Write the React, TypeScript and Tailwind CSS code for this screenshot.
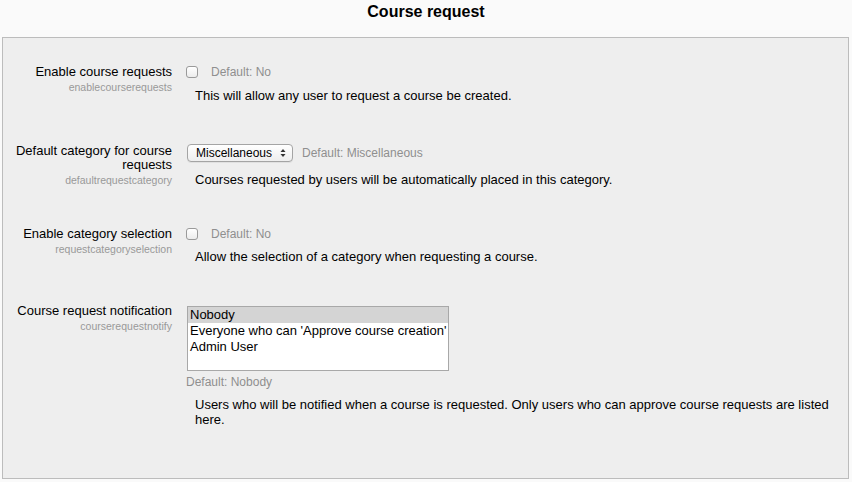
const font = { fontFamily: '"Liberation Sans", Arial, Helvetica, sans-serif' };

function Checkbox() {
  return (
    <div className="w-[12px] h-[12px] rounded-[3px] border border-[#9a9a9a] bg-gradient-to-b from-white to-[#ececec] shadow-[inset_0_1px_0_#fff]" />
  );
}

function SelectBox({ value }: { value: string }) {
  return (
    <div className="w-[106px] h-[18px] rounded-[4px] border border-[#a4a4a4] bg-gradient-to-b from-white to-[#eeeeee] flex items-center justify-between pl-[8px] pr-[6px] shadow-[0_1px_0_rgba(0,0,0,0.06)]">
      <span className="text-[12px] leading-none text-black">{value}</span>
      <svg width="6" height="10" viewBox="0 0 6 10" className="text-[#333]">
        <path d="M0.5 4 L3 1 L5.5 4 Z" fill="currentColor" />
        <path d="M0.5 6 L3 9 L5.5 6 Z" fill="currentColor" />
      </svg>
    </div>
  );
}

function Label({ lines, name, pt }: { lines: string[]; name: string; pt: string }) {
  return (
    <div className={`w-[169px] shrink-0 text-right ${pt}`}>
      {lines.map((l) => (
        <div key={l} className="text-[13px] leading-[14px] text-black">{l}</div>
      ))}
      <div className="text-[10.5px] leading-[12px] mt-[2px] text-[#999]">{name}</div>
    </div>
  );
}

export default function App() {
  return (
    <div className="w-[852px] h-[482px] bg-[#fafafa] overflow-hidden" style={font}>
      <div className="h-[37px] pt-[2px] text-center text-[16px] leading-[20px] font-bold text-black">Course request</div>
      <div className="mx-[2px] w-[847px] h-[442px] border border-[#bcbcbc] bg-[#eeeeee] pt-[24px] flex flex-col">
        {/* enablecourserequests */}
        <div className="flex items-start">
          <Label lines={['Enable course requests']} name="enablecourserequests" pt="pt-[3px]" />
          <div className="ml-[14px]">
            <div className="h-[20px] flex items-center">
              <Checkbox />
              <span className="ml-[13px] text-[12px] text-[#8f8f8f]">Default: No</span>
            </div>
            <div className="ml-[9px] mt-[6px] text-[13px] leading-[16px] text-black">
              This will allow any user to request a course be created.
            </div>
          </div>
        </div>

        {/* defaultrequestcategory */}
        <div className="flex items-start mt-[39px]">
          <Label lines={['Default category for course', 'requests']} name="defaultrequestcategory" pt="pt-[1px]" />
          <div className="ml-[14px]">
            <div className="h-[20px] flex items-center pl-[1px]">
              <SelectBox value="Miscellaneous" />
              <span className="ml-[9px] text-[12px] text-[#8f8f8f]">Default: Miscellaneous</span>
            </div>
            <div className="ml-[9px] mt-[9px] text-[13px] leading-[16px] text-black">
              Courses requested by users will be automatically placed in this category.
            </div>
          </div>
        </div>

        {/* requestcategoryselection */}
        <div className="flex items-start mt-[36px]">
          <Label lines={['Enable category selection']} name="requestcategoryselection" pt="pt-[3px]" />
          <div className="ml-[14px]">
            <div className="h-[20px] flex items-center">
              <Checkbox />
              <span className="ml-[13px] text-[12px] text-[#8f8f8f]">Default: No</span>
            </div>
            <div className="ml-[9px] mt-[5px] text-[13px] leading-[16px] text-black">
              Allow the selection of a category when requesting a course.
            </div>
          </div>
        </div>

        {/* courserequestnotify */}
        <div className="flex items-start mt-[38px]">
          <Label lines={['Course request notification']} name="courserequestnotify" pt="pt-[1px]" />
          <div className="ml-[14px]">
            <div className="mt-[3px] ml-[1px] w-[262px] h-[65px] border border-[#a8a8a8] bg-white text-[13px] leading-[16px] text-black">
              <div className="bg-[#d4d4d4] pl-[2px]">Nobody</div>
              <div className="pl-[2px]">Everyone who can 'Approve course creation'</div>
              <div className="pl-[2px]">Admin User</div>
            </div>
            <div className="mt-[4px] text-[12px] leading-[14px] text-[#8f8f8f]">Default: Nobody</div>
            <div className="ml-[9px] mt-[8px] w-[650px] text-[13px] leading-[15px] text-black">
              Users who will be notified when a course is requested. Only users who can approve course requests are listed here.
            </div>
          </div>
        </div>
      </div>
    </div>
  );
}
